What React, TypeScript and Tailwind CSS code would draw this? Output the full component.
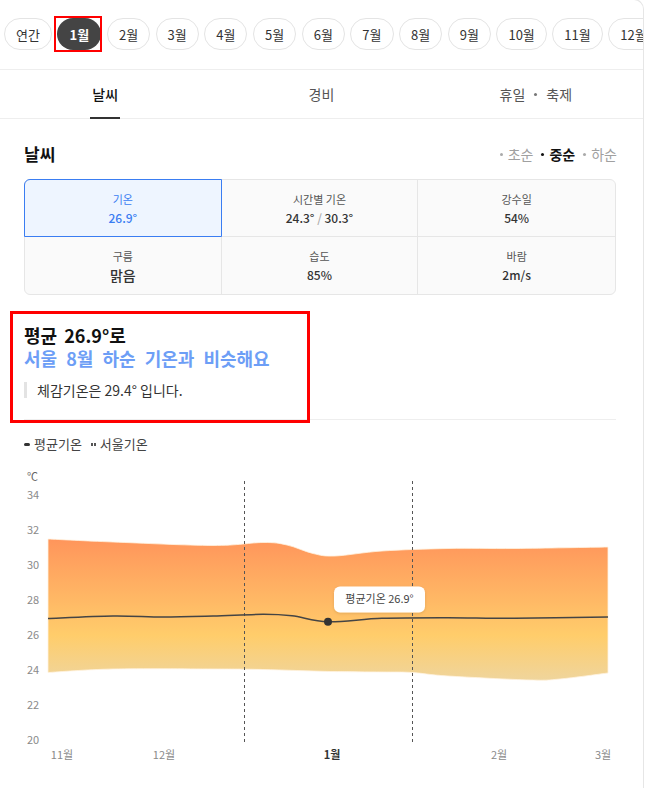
import React from "react";

type P = [number, number];

function curve(pts: P[], start: boolean): string {
  let d = start ? `M${pts[0][0]},${pts[0][1]}` : `L${pts[0][0]},${pts[0][1]}`;
  for (let i = 0; i < pts.length - 1; i++) {
    const p0 = pts[i - 1] || pts[i];
    const p1 = pts[i];
    const p2 = pts[i + 1];
    const p3 = pts[i + 2] || p2;
    const c1x = p1[0] + (p2[0] - p0[0]) / 6;
    const c1y = p1[1] + (p2[1] - p0[1]) / 6;
    const c2x = p2[0] - (p3[0] - p1[0]) / 6;
    const c2y = p2[1] - (p3[1] - p1[1]) / 6;
    d += ` C${c1x.toFixed(2)},${c1y.toFixed(2)} ${c2x.toFixed(2)},${c2y.toFixed(2)} ${p2[0]},${p2[1]}`;
  }
  return d;
}

const upper: P[] = [
  [48, 538], [113, 541], [213, 544.5], [263, 541.5], [287, 544], [313, 552.5],
  [335, 555], [382, 550], [448, 547.5], [515, 547.5], [608, 546],
];
const lower: P[] = [
  [48, 671.5], [113, 668], [213, 668], [263, 668.5], [330, 670.5], [382, 671],
  [412, 671.5], [448, 675], [530, 679], [560, 678], [608, 672],
];
const avg: P[] = [
  [48, 617.5], [113, 615], [163, 616], [213, 615], [263, 613.3], [292, 614.8],
  [328, 620.7], [382, 617.3], [448, 616.7], [515, 617.3], [608, 616],
];

const bandPath = curve(upper, true) + " " + curve([...lower].reverse(), false) + " Z";
const avgPath = curve(avg, true);

const months = ["2월", "3월", "4월", "5월", "6월", "7월", "8월", "9월", "10월", "11월", "12월"];

function Chip({ label }: { label: string }) {
  return (
    <div className="h-8 px-[11px] shrink-0 flex items-center rounded-full border border-[#e4e4e4] text-[13px] leading-none text-[#333]">
      {label}
    </div>
  );
}

function Cell({
  label,
  value,
  big,
  selected,
  className,
}: {
  label: string;
  value: React.ReactNode;
  big?: boolean;
  selected?: boolean;
  className?: string;
}) {
  return (
    <div className={`relative h-[57px] flex flex-col items-center pt-[11px] ${selected ? "bg-[#eef5ff]" : ""} ${className || ""}`}>
      {selected && (
        <span className="absolute -inset-px border border-[#3a7df2] rounded-tl-md pointer-events-none" />
      )}
      <div className={`text-[11px] leading-4 ${selected ? "text-[#3a7df2]" : "text-[#555]"}`}>{label}</div>
      <div
        className={`mt-[2px] leading-[18px] font-medium ${big ? "text-[14px]" : "text-[12px]"} ${selected ? "text-[#3a7df2]" : "text-[#333]"}`}
      >
        {value}
      </div>
    </div>
  );
}

export default function App() {
  const yLabels = [34, 32, 30, 28, 26, 24, 22, 20];
  return (
    <div className="w-[645px] h-[788px] bg-white overflow-hidden font-['Noto_Sans_CJK_KR','Noto_Sans',sans-serif]">
      <div className="w-[644px] h-[789px] -mt-px border-t border-r border-[#e6e6e6] rounded-tr-[10px] overflow-hidden">
        {/* month chips */}
        <div className="flex gap-[5.5px] pl-[4px] pt-[18px] pb-[19px] border-b border-[#eeeeee]">
          <Chip label="연간" />
          <div className="relative shrink-0">
            <div className="h-8 w-[44px] flex items-center justify-center rounded-full bg-[#444] text-white text-[13px] font-bold leading-none">
              1월
            </div>
            <span className="absolute left-[-3px] right-[-1px] top-[-2px] bottom-[-2px] border-2 border-[#ff0000] pointer-events-none" />
          </div>
          {months.map((m) => (
            <Chip key={m} label={m} />
          ))}
        </div>

        {/* tabs */}
        <div className="grid grid-cols-3 h-[49px] border-b border-[#eeeeee] text-[14px]">
          <div className="relative flex items-center justify-center">
            <span className="text-[#111] font-medium pr-[4px]">날씨</span>
            <span className="absolute bottom-[-1px] left-[90px] w-[30px] h-[2px] bg-[#333]" />
          </div>
          <div className="flex items-center justify-center text-[#555]">경비</div>
          <div className="flex items-center justify-center text-[#555] gap-[9px]">
            <span>휴일</span>
            <span className="w-[3px] h-[3px] rounded-full bg-[#777]" />
            <span>축제</span>
          </div>
        </div>

        {/* content */}
        <div className="pl-6 pr-[27px]">
          <div className="flex items-center justify-between pt-[23px] h-[47px]">
            <div className="text-[17px] font-bold leading-6 text-[#111]">날씨</div>
            <div className="flex items-center text-[14px] leading-6 mr-[-1px]">
              <span className="w-[3px] h-[3px] rounded-full bg-[#aaa] mr-[5px]" />
              <span className="text-[#a0a0a0]">초순</span>
              <span className="w-[3px] h-[3px] rounded-full bg-[#111] ml-[8px] mr-[5px]" />
              <span className="text-[#111] font-bold">중순</span>
              <span className="w-[3px] h-[3px] rounded-full bg-[#aaa] ml-[8px] mr-[5px]" />
              <span className="text-[#a0a0a0]">하순</span>
            </div>
          </div>

          <div className="mt-[13px] rounded-md border border-[#e6e6e6] bg-[#fafafa] grid grid-cols-3">
            <Cell label="기온" value="26.9°" selected className="border-b border-r border-[#e6e6e6] rounded-tl-md" />
            <Cell
              label="시간별 기온"
              value={
                <span>
                  24.3° <span className="text-[#aaa]">/</span> 30.3°
                </span>
              }
              className="border-b border-r border-[#e6e6e6]"
            />
            <Cell label="강수일" value="54%" className="border-b border-[#e6e6e6]" />
            <Cell label="구름" value="맑음" big className="border-r border-[#e6e6e6]" />
            <Cell label="습도" value="85%" className="border-r border-[#e6e6e6]" />
            <Cell label="바람" value="2m/s" />
          </div>

          {/* summary */}
          <div className="relative mt-[29px]">
            <span className="absolute left-[-14px] top-[-13px] w-[300px] h-[112px] border-[3px] border-[#ff0000] pointer-events-none" />
            <div className="text-[18px] font-bold leading-[23px] text-[#111] [word-spacing:3px]">평균 26.9°로</div>
            <div className="text-[18px] font-bold leading-[23px] text-[#6d9ef6] [word-spacing:5px]">서울 8월 하순 기온과 비슷해요</div>
            <div className="mt-[12px] border-l-[3px] border-[#e3e3e3] pl-[10px] text-[14px] leading-4 text-[#333]">
              체감기온은 29.4° 입니다.
            </div>
            <div className="mt-[21px] border-t border-[#eeeeee]" />
          </div>

          {/* legend */}
          <div className="mt-[16px] flex items-center text-[13px] leading-4 text-[#444]">
            <span className="w-[6px] h-[3px] rounded-sm bg-[#333] mr-[4px]" />
            <span>평균기온</span>
            <span className="ml-[9px] mr-[4px] flex gap-[1px]">
              <span className="w-[2px] h-[3px] bg-[#555]" />
              <span className="w-[2px] h-[3px] bg-[#555]" />
            </span>
            <span>서울기온</span>
          </div>
        </div>

        {/* chart */}
        <svg className="block mt-[9px]" width="643" height="328" viewBox="0 460 643 328">
          <defs>
            <linearGradient id="band" gradientUnits="userSpaceOnUse" x1="0" y1="538" x2="0" y2="680">
              <stop offset="0" stopColor="#ff955b" />
              <stop offset="0.68" stopColor="#ffcd6b" />
              <stop offset="1" stopColor="#efd59d" />
            </linearGradient>
            <filter id="sh" x="-20%" y="-40%" width="140%" height="180%">
              <feDropShadow dx="0" dy="1" stdDeviation="1.5" floodColor="#000" floodOpacity="0.12" />
            </filter>
          </defs>
          <text x="27" y="477" fontSize="11" fill="#666" dominantBaseline="middle">
            ℃
          </text>
          {yLabels.map((v, i) => (
            <text key={v} x="27" y={495 + i * 35} fontSize="11" fill="#8a8a8a" dominantBaseline="middle">
              {v}
            </text>
          ))}
          <path d={bandPath} fill="url(#band)" stroke="#fff3e0" strokeWidth="0.8" />
          <line x1="244.5" y1="480" x2="244.5" y2="743" stroke="#555" strokeWidth="1" strokeDasharray="3 3" />
          <line x1="412.5" y1="480" x2="412.5" y2="743" stroke="#555" strokeWidth="1" strokeDasharray="3 3" />
          <path d={avgPath} fill="none" stroke="#444" strokeWidth="1.5" />
          <circle cx="328" cy="620.7" r="4" fill="#333" />
          <rect x="334" y="585.5" width="91" height="26" rx="6" fill="#fff" filter="url(#sh)" />
          <text x="379.5" y="599" fontSize="11" fill="#444" textAnchor="middle" dominantBaseline="middle">
            평균기온 26.9°
          </text>
          <text x="62" y="755" fontSize="11" fill="#8a8a8a" textAnchor="middle" dominantBaseline="middle">11월</text>
          <text x="164" y="755" fontSize="11" fill="#8a8a8a" textAnchor="middle" dominantBaseline="middle">12월</text>
          <text x="332" y="755" fontSize="11" fill="#333" fontWeight="700" textAnchor="middle" dominantBaseline="middle">1월</text>
          <text x="499" y="755" fontSize="11" fill="#8a8a8a" textAnchor="middle" dominantBaseline="middle">2월</text>
          <text x="603" y="755" fontSize="11" fill="#8a8a8a" textAnchor="middle" dominantBaseline="middle">3월</text>
        </svg>
      </div>
    </div>
  );
}
